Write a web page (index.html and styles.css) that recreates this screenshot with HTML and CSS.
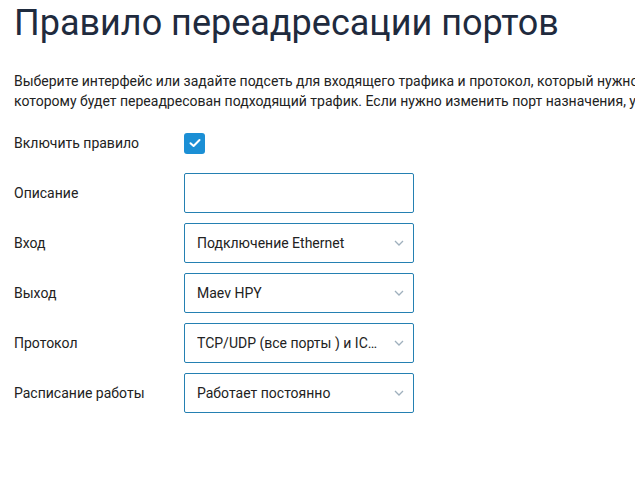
FILE: index.html
```html
<!DOCTYPE html>
<html lang="ru">
<head>
<meta charset="utf-8">
<title>Правило переадресации портов</title>
<link rel="stylesheet" href="styles.css">
</head>
<body>
<main class="page">
  <h1 class="title">Правило переадресации портов</h1>
  <p class="intro">Выберите интерфейс или задайте подсеть для входящего трафика и протокол, который нужно переадресовать, а также укажите IP-адрес устройства в локальной сети, на<br>которому будет переадресован подходящий трафик. Если нужно изменить порт назначения, укажите его в поле «Порт назначения».</p>
  <form class="form">
    <div class="row">
      <span class="label">Включить правило</span>
      <span class="check">
        <svg width="12" height="10" viewBox="0 0 12 10"><path d="M1.5 5.2 L4.6 8 L10.5 2" fill="none" stroke="#fff" stroke-width="2" stroke-linecap="round" stroke-linejoin="round"/></svg>
      </span>
    </div>
    <div class="row">
      <span class="label">Описание</span>
      <span class="field"></span>
    </div>
    <div class="row">
      <span class="label">Вход</span>
      <span class="field select"><span class="value">Подключение Ethernet</span><svg class="chev" width="10" height="6" viewBox="0 0 10 6"><path d="M1 1 L5 5 L9 1" fill="none" stroke="#9fb0bd" stroke-width="1.3"/></svg></span>
    </div>
    <div class="row">
      <span class="label">Выход</span>
      <span class="field select"><span class="value">Maev HPY</span><svg class="chev" width="10" height="6" viewBox="0 0 10 6"><path d="M1 1 L5 5 L9 1" fill="none" stroke="#9fb0bd" stroke-width="1.3"/></svg></span>
    </div>
    <div class="row">
      <span class="label">Протокол</span>
      <span class="field select"><span class="value">TCP/UDP (все порты ) и ICMP</span><svg class="chev" width="10" height="6" viewBox="0 0 10 6"><path d="M1 1 L5 5 L9 1" fill="none" stroke="#9fb0bd" stroke-width="1.3"/></svg></span>
    </div>
    <div class="row">
      <span class="label">Расписание работы</span>
      <span class="field select"><span class="value">Работает постоянно</span><svg class="chev" width="10" height="6" viewBox="0 0 10 6"><path d="M1 1 L5 5 L9 1" fill="none" stroke="#9fb0bd" stroke-width="1.3"/></svg></span>
    </div>
  </form>
</main>
</body>
</html>
```
FILE: styles.css
```css
html, body {
  margin: 0;
  padding: 0;
  background: #fff;
}
body {
  font-family: Roboto, "Noto Sans", sans-serif;
  color: #222;
  overflow: hidden;
}
.page {
  padding: 2px 0 0 14px;
}
.title {
  margin: 0;
  font-size: 36px;
  font-weight: 400;
  line-height: 42px;
  color: #1f2b3e;
  white-space: nowrap;
}
.intro {
  margin: 27px 0 0;
  font-size: 14px;
  line-height: 20px;
  color: #222;
  white-space: nowrap;
}
.form {
  margin-top: 12px;
  display: flex;
  flex-direction: column;
  gap: 10px;
}
.row {
  display: grid;
  grid-template-columns: 170px 230px;
  align-items: center;
  height: 40px;
}
.label {
  font-size: 14px;
  color: #222;
}
.check {
  width: 21px;
  height: 21px;
  border-radius: 3px;
  background: #1b8fd5;
  display: flex;
  align-items: center;
  justify-content: center;
}
.field {
  box-sizing: border-box;
  height: 40px;
  border: 1px solid #2480b2;
  border-radius: 2px;
  display: flex;
  align-items: center;
  padding: 0 9px 0 12px;
}
.value {
  flex: 1;
  font-size: 14px;
  color: #222;
  white-space: nowrap;
  overflow: hidden;
  text-overflow: ellipsis;
  margin-right: 14px;
}
.chev {
  flex: none;
}
```
